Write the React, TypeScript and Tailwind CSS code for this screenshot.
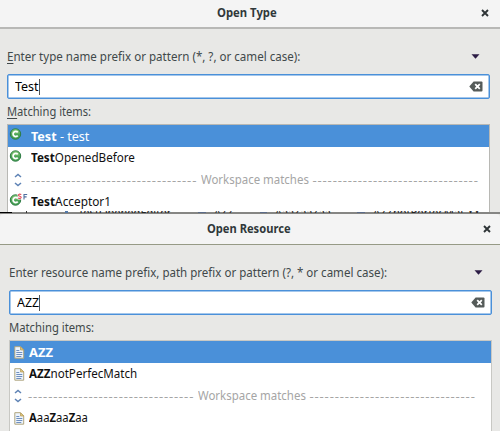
import React from "react";

function Txt({ children, w, className = "" }: { children: React.ReactNode; w: number; className?: string }) {
  const ref = React.useRef<HTMLSpanElement>(null);
  React.useLayoutEffect(() => {
    const el = ref.current;
    if (!el) return;
    const fit = () => {
      el.style.transform = `scaleX(${w / el.offsetWidth})`;
    };
    fit();
    document.fonts.ready.then(fit);
  }, [w]);
  return (
    <span className={"block shrink-0 whitespace-pre " + className} style={{ width: w }}>
      <span ref={ref} className="inline-block origin-left">{children}</span>
    </span>
  );
}

function Close() {
  return (
    <svg width="8" height="8" viewBox="0 0 8 8" className="shrink-0">
      <path d="M1 1L7 7M7 1L1 7" stroke="#2e3436" strokeWidth="1.9" />
    </svg>
  );
}

function Arrow() {
  return (
    <svg width="9" height="5" viewBox="0 0 9 5" className="shrink-0">
      <path d="M0.5 0.3H8.5L4.5 4.8Z" fill="#2c1c45" />
    </svg>
  );
}

function Clear() {
  return (
    <svg width="14" height="11" viewBox="0 0 14 11" className="shrink-0">
      <path d="M4.6 0.5H12.5Q13.5 0.5 13.5 1.5V9.5Q13.5 10.5 12.5 10.5H4.6L0.3 5.5Z" fill="#555b59" />
      <path d="M6.2 3.2L10.8 7.8M10.8 3.2L6.2 7.8" stroke="#fff" strokeWidth="1.8" />
    </svg>
  );
}

function ClassIcon({ modifiers = false }: { modifiers?: boolean }) {
  return (
    <svg width="19" height="14" viewBox="0 0 19 14" className="mb-[4px] shrink-0">
      <circle cx="6.5" cy="7" r="5.2" fill="#4ba457" stroke="#2e7b45" strokeWidth="1" />
      <path d="M2.2 6.5A4.3 4.3 0 0 1 10.8 6.5Z" fill="#76bb6c" />
      <path d="M8.7 5.3A2.6 2.6 0 1 0 8.7 8.7" fill="none" stroke="#fff" strokeWidth="1.8" />
      {modifiers && (
        <>
          <rect x="8.6" y="0" width="5" height="6.5" fill="#fff" />
          <path d="M12.3 1.6Q9.4 0.5 9.5 2.2C9.6 3.5 12.4 3 12.2 4.5Q11.9 5.9 9.2 5.1" fill="none" stroke="#e34b5b" strokeWidth="1.1" />
          <path d="M15 6.5V1.5H18.2M15 3.9H17.6" fill="none" stroke="#506f9f" strokeWidth="1.1" />
        </>
      )}
    </svg>
  );
}

function FileIcon() {
  return (
    <svg width="11" height="13" viewBox="0 0 11 13" className="shrink-0">
      <path d="M.8 .7H6.5L9.7 3.9V12.2H.8Z" fill="#edf4fd" stroke="#b0a67e" strokeWidth="1" />
      <path d="M6.5 .8V4H9.7Z" fill="#e7ca7c" stroke="#b49a55" strokeWidth=".7" />
      <path d="M2.3 4.5H5.3M2.3 6.5H8.3M2.3 8.5H8.3M2.3 10.5H7.3" stroke="#6f90bf" strokeWidth="1" />
    </svg>
  );
}

function Chevrons() {
  return (
    <svg width="8" height="14" viewBox="0 0 8 14" className="shrink-0">
      <path d="M1 4L4 1.4L7 4M1 10L4 12.6L7 10" fill="none" stroke="#5e83b5" strokeWidth="1.5" />
    </svg>
  );
}

function Dashes() {
  return <span className="w-[166px] shrink-0 whitespace-pre tracking-[0.85px]">---------------------------------</span>;
}

function Separator({ offset }: { offset: string }) {
  return (
    <div className="flex h-[22px] items-center text-[#a5a5a5]">
      <div className={"flex shrink-0 " + offset}><Chevrons /></div>
      <Dashes />
      <span className="w-[4px] shrink-0" />
      <Txt w={107.5} className="-mt-[2px]">Workspace matches</Txt>
      <span className="w-[4px] shrink-0" />
      <Dashes />
    </div>
  );
}

function Field({ text, w }: { text: string; w: number }) {
  return (
    <div className="flex h-[25px] items-center rounded-[2px] border border-[#4a90d9] bg-white pr-[6px] pl-[6.5px] text-black shadow-[inset_0_0_0_0.5px_#4a90d9]">
      <Txt w={w} className="-mt-[2px]">{text}</Txt>
      <span className="h-4 w-px bg-[#555]" />
      <span className="flex-1" />
      <Clear />
    </div>
  );
}

// Sliver of the window behind, visible between the two dialogs.
function BackgroundSliver() {
  return (
    <div className="relative h-[2px] bg-[#868684]">
      <div className="absolute -top-px left-0 flex h-[2px] w-[500px] overflow-hidden text-[12px] leading-[14px] text-[#222]">
        <div className="mt-px h-px w-[12px] bg-black" />
        <span className="ml-[14px] w-px bg-[#333]" />
        <span className="ml-[38px] w-[3px] bg-[#5278a8]" />
        <div className="-mt-[5px] ml-[10px] w-[120px]"><Txt w={93}>TestOpenedEditor</Txt></div>
        <span className="mt-px w-[8px] bg-[#5b6b88]" />
        <div className="-mt-[5px] ml-[8px] w-[46px]"><Txt w={19}>AZZ</Txt></div>
        <span className="mt-px w-[7px] bg-[#5b6b88]" />
        <div className="-mt-[5px] ml-[8px] w-[82px]"><Txt w={56}>AaaZaaZaa</Txt></div>
        <span className="mt-px w-[8px] bg-[#5b6b88]" />
        <div className="-mt-[5px] ml-[8px]"><Txt w={107}>AZZnotPerfecMat.XX</Txt></div>
      </div>
    </div>
  );
}

export default function App() {
  return (
    <div className="h-[431px] w-[500px] overflow-hidden bg-[#e8e8e6] font-['Noto_Sans','Open_Sans',sans-serif] text-[13px] leading-[18px] text-[#41484a]">
      <section className="h-[212px] overflow-hidden">
        <header className="grid h-[29px] grid-cols-[1fr_auto_1fr] items-center border-b-2 border-[#b8b8b6] bg-[#f4f4f4] pr-[11px] pb-[2px] pl-[4px] text-[#30383a]">
          <span />
          <Txt w={60} className="-mt-[2px] font-bold">Open Type</Txt>
          <span className="flex justify-end"><Close /></span>
        </header>
        <div className="pr-[10px] pl-[7px] pt-[18px]">
          <div className="flex h-[18px] items-center justify-between pr-[10px]">
            <Txt w={293}><span className="underline underline-offset-2">E</span>nter type name prefix or pattern (*, ?, or camel case):</Txt>
            <Arrow />
          </div>
          <div className="mt-[9px]"><Field text="Test" w={24} /></div>
          <div className="mt-[3px] h-[18px]"><Txt w={84}><span className="underline underline-offset-2">M</span>atching items:</Txt></div>
          <div className="mt-[4px] h-[95px] border border-[#b8b8b4] bg-white text-[#111]">
            <div className="flex h-[22px] items-center bg-[#4a90d9] pl-px text-white">
              <div className="w-[22px]"><ClassIcon /></div>
              <Txt w={58} className="-mt-px"><b>Test</b> - test</Txt>
            </div>
            <div className="flex h-[22px] items-center pl-px">
              <div className="w-[22px]"><ClassIcon /></div>
              <Txt w={104} className="-mt-[2px]"><b>Test</b>OpenedBefore</Txt>
            </div>
            <Separator offset="w-[23px] pl-[6px]" />
            <div className="flex h-[22px] items-center pl-px">
              <div className="w-[22px]"><ClassIcon modifiers /></div>
              <Txt w={80} className="-mt-[2px]"><b>Test</b>Acceptor1</Txt>
            </div>
          </div>
        </div>
      </section>
      <BackgroundSliver />
      <section className="h-[217px] overflow-hidden">
        <header className="grid h-[31px] grid-cols-[1fr_auto_1fr] items-center rounded-t-[4px] border-b border-[#969a86] bg-[#f4f4f4] pr-[9px] pb-px pl-[7px] text-[#30383a]">
          <span />
          <Txt w={84} className="-mt-px font-bold">Open Resource</Txt>
          <span className="flex justify-end"><Close /></span>
        </header>
        <div className="pr-[8px] pl-[9px] pt-[18px]">
          <div className="flex h-[18px] items-center justify-between pr-[9px]">
            <Txt w={378}>Enter resource name prefix, path prefix or pattern (?, * or camel case):</Txt>
            <Arrow />
          </div>
          <div className="mt-[9px]"><Field text="AZZ" w={22} /></div>
          <div className="mt-[3px] h-[18px]"><Txt w={85}>Matching items:</Txt></div>
          <div className="mt-[4px] h-[100px] border border-[#c8c8c4] bg-white text-[#111]">
            <div className="flex h-[22px] items-center bg-[#4a90d9] pl-[4px] text-white">
              <div className="w-[15px]"><FileIcon /></div>
              <Txt w={24} className="-mt-px font-bold">AZZ</Txt>
            </div>
            <div className="flex h-[22px] items-center pl-[4px]">
              <div className="w-[15px]"><FileIcon /></div>
              <Txt w={108} className="-mt-[2px]"><b>AZZ</b>notPerfecMatch</Txt>
            </div>
            <Separator offset="w-[18px] pl-[4px]" />
            <div className="flex h-[22px] items-center pl-[4px]">
              <div className="w-[15px]"><FileIcon /></div>
              <Txt w={59} className="-mt-[2px]"><b>A</b>aa<b>Z</b>aa<b>Z</b>aa</Txt>
            </div>
          </div>
        </div>
      </section>
    </div>
  );
}
